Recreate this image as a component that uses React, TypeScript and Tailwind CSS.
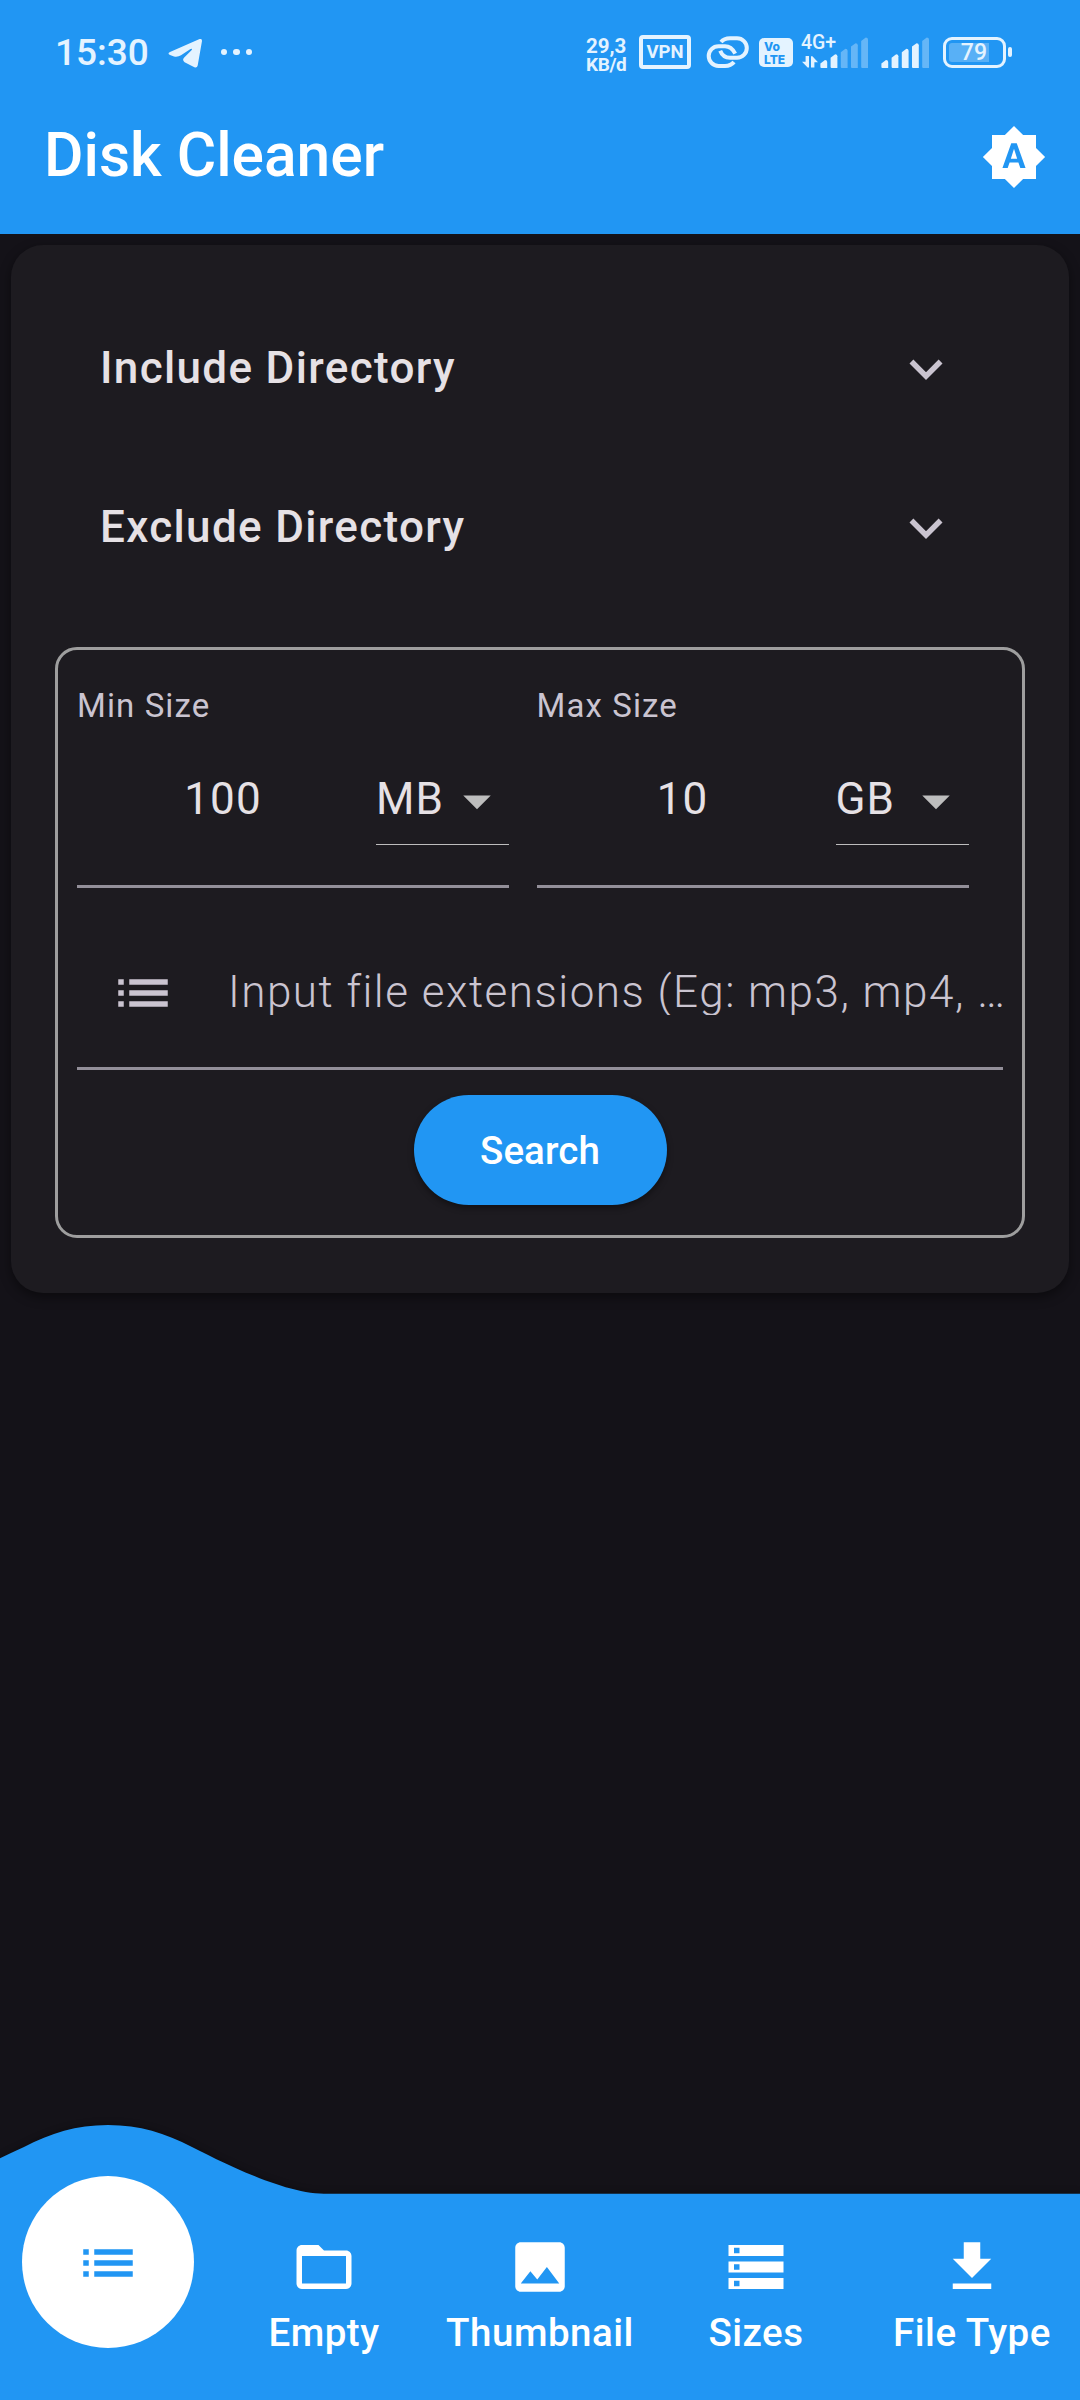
import React from "react";
import type { IconType } from "react-icons";
import {
  MdArrowDropDown,
  MdBrightnessAuto,
  MdExpandMore,
  MdFileDownload,
  MdFolderOpen,
  MdImage,
  MdList,
  MdStorage,
} from "react-icons/md";

function TelegramIcon() {
  return (
    <svg className="mt-[38px] ml-[18px] h-[31px] w-[36px]" viewBox="167 38 36 31" fill="currentColor">
      <path d="M199.6 39.1 170 52Q167 53.6 170 55L174 56.5Q178 57.2 181 55.3L190.5 49Q193.2 48 191.5 50.2L184.2 57.6Q181.8 60 184.6 62.2L194.4 67.2Q197 68.2 197.7 65.4L202 41Q202.2 38.2 199.6 39.1Z" />
    </svg>
  );
}

function LinkIcon() {
  return (
    <svg
      className="mt-[34px] ml-[14px] h-[36px] w-[46px]"
      viewBox="705 34 46 36"
      fill="none"
      stroke="currentColor"
      strokeWidth="4"
    >
      <path d="M735.2 53.6C732.5 48.5 729 46.3 725 46.3H718.5A9.8 9.8 0 0 0 718.5 65.9H725Q731 65.9 734 62" />
      <path d="M721 42Q724 38.2 730 38.2H737A9.8 9.8 0 0 1 737 57.8H730Q723 57.8 720.2 50.8" />
    </svg>
  );
}

function SignalBars({ active, className }: { active: number; className: string }) {
  const tops = [60, 54.3, 48.8, 43.2, 37.6];
  return (
    <svg className={className} viewBox="0 36 49 33" fill="currentColor">
      {tops.map((y, i) => {
        const x = i * 10.2 + 0.4;
        return (
          <path
            key={y}
            opacity={i < active ? 1 : 0.35}
            d={`M${x} ${y + 3.4}L${x + 4.6} ${y}Q${x + 6.8} ${y} ${x + 6.8} ${y + 2}V68H${x + 1}Q${x} 68 ${x} 67Z`}
          />
        );
      })}
    </svg>
  );
}

function StatusBar() {
  return (
    <div className="flex h-[80px] items-start text-[#e4f3ff]">
      <span className="mt-[31px] ml-[55px] w-[94px] text-[37px] leading-[44px] font-medium">15:30</span>
      <TelegramIcon />
      <div className="mt-[49px] ml-[18px] flex gap-[6px]">
        <span className="size-[6.4px] rounded-full bg-current" />
        <span className="size-[6.4px] rounded-full bg-current" />
        <span className="size-[6.4px] rounded-full bg-current" />
      </div>
      <div className="ml-auto flex items-start">
        <div className="mt-[37px] flex w-[42px] flex-col font-bold whitespace-nowrap">
          <span className="text-[20.5px] leading-[18px]">29,3</span>
          <span className="text-[19px] leading-[19px] tracking-[-0.4px]">KB/d</span>
        </div>
        <div className="mt-[35px] ml-[11px] flex h-[34px] w-[52px] items-center justify-center rounded-[4px] border-4 border-current text-[18.5px] leading-[20px] font-bold">
          VPN
        </div>
        <LinkIcon />
        <div className="mt-[38px] ml-[8px] flex h-[29px] w-[34px] flex-col rounded-[5px] bg-current pt-[2px] pl-[5px] font-['Inter'] text-[12px] leading-[13px] font-extrabold">
          <span className="text-[#2196f3]">Vo</span>
          <span className="text-[#2196f3]">LTE</span>
        </div>
        <div className="relative mt-[36px] ml-[9px] flex w-[67px] justify-between">
          <span className="absolute -top-[3px] -left-[1px] text-[19.5px] leading-[20px] font-medium">4G+</span>
          <svg className="mt-[20px] h-[13px] w-[16px]" viewBox="0 0 16 13" fill="currentColor">
            <path d="M3.6 0H7V11.5H5.6L0 5.8H3.6ZM9 .3H10.4L16 6.3H12.4V11.5H9Z" />
          </svg>
          <SignalBars active={2} className="h-[33px] w-[49px]" />
        </div>
        <SignalBars active={4} className="mt-[36px] ml-[12px] h-[33px] w-[49px]" />
        <div className="mt-[37px] ml-[13px] flex h-[31px] w-[63px] rounded-[9px] border-[3px] border-current p-[3px]">
          <div className="flex w-[40px] items-center justify-end rounded-l-[3px] bg-white/25 pr-[2px] text-[23px] leading-[24px] font-medium">
            79
          </div>
        </div>
        <div className="mt-[47px] mr-[68px] ml-[2px] h-[10px] w-[4px] rounded-[2px] bg-current" />
      </div>
    </div>
  );
}

function DirectoryRow({ title }: { title: string }) {
  return (
    <div className="flex h-[159px] items-center justify-between pr-[66px] pb-[2px] pl-[45px]">
      <span className="text-[44px] leading-[56px] font-medium tracking-[1.34px]">{title}</span>
      <MdExpandMore className="mt-[2px] size-[66px] text-[#cac4d0]" />
    </div>
  );
}

function SizeField({ label, value, unit }: { label: string; value: string; unit: string }) {
  return (
    <div className="w-[432px] border-b-[3px] border-[#938f99]">
      <div className="text-[33px] leading-[44px] tracking-[1.1px] text-[#cac4d0]">{label}</div>
      <div className="flex h-[157px] items-start justify-between pt-[26px] text-[44px] leading-[90px] tracking-[1.1px]">
        <span className="w-[292px] text-center">{value}</span>
        <div className="flex h-[91px] w-[133px] items-center justify-between border-b border-[#bdbdbd]">
          <span>{unit}</span>
          <MdArrowDropDown className="mt-[3px] size-[66px] shrink-0 text-[#bdbdbd]" />
        </div>
      </div>
    </div>
  );
}

function NavItem({ icon: Icon, label }: { icon: IconType; label: string }) {
  return (
    <div className="flex flex-1 flex-col items-center pt-[109px]">
      <Icon className="size-[66px]" />
      <span className="mt-[10px] text-[38.5px] leading-[45px] font-medium tracking-[0.5px] whitespace-nowrap">
        {label}
      </span>
    </div>
  );
}

function BottomNav() {
  return (
    <nav className="relative mt-auto flex h-[275px] text-white">
      <svg
        className="absolute inset-0 h-[275px] w-[1080px] drop-shadow-[0_-1px_3px_rgba(0,0,0,0.3)]"
        viewBox="0 2125 1080 275"
        fill="#2196f3"
      >
        <path d="M0 2158.3C8 2154.4 16 2150.7 24 2147C51 2133.2 76 2125 108 2125C140 2125 165 2133.2 192 2147C225 2163.8 285 2193.7 324 2193.7H1080V2400H0Z" />
      </svg>
      <div className="relative flex flex-1">
        <div className="flex flex-1 justify-center pt-[51px]">
          <div className="flex size-[172px] items-center justify-center rounded-full bg-white pt-[2px]">
            <MdList className="size-[66px] text-[#2196f3]" />
          </div>
        </div>
        <NavItem icon={MdFolderOpen} label="Empty" />
        <NavItem icon={MdImage} label="Thumbnail" />
        <NavItem icon={MdStorage} label="Sizes" />
        <NavItem icon={MdFileDownload} label="File Type" />
      </div>
    </nav>
  );
}

export default function App() {
  return (
    <div className="flex h-[2400px] w-[1080px] flex-col overflow-hidden bg-[#141218] font-['Roboto',sans-serif] text-[#e6e1e5]">
      <header className="h-[234px] bg-[#2196f3]">
        <StatusBar />
        <div className="flex h-[154px] items-center justify-between pr-[33px] pl-[44px] text-white">
          <h1 className="pb-[2px] text-[60.5px] leading-[72px] font-medium">Disk Cleaner</h1>
          <MdBrightnessAuto className="size-[66px]" />
        </div>
      </header>

      <main className="mx-[11px] mt-[11px] h-[1048px] rounded-[32px] bg-[#1d1b20] px-[44px] pt-[44px] shadow-[0_4px_12px_rgba(0,0,0,0.45)]">
        <DirectoryRow title="Include Directory" />
        <DirectoryRow title="Exclude Directory" />
        <section className="mt-[40px] flex h-[591px] flex-col rounded-[22px] border-[3px] border-[#9e9e9e] px-[19px] pt-[34px]">
          <div className="flex gap-[27.5px]">
            <SizeField label="Min Size" value="100" unit="MB" />
            <SizeField label="Max Size" value="10" unit="GB" />
          </div>
          <div className="flex h-[182px] items-start border-b-[3px] border-[#938f99] pt-[72px] pl-[33px] text-[#cac4d0]">
            <MdList className="size-[66px] shrink-0" />
            <span className="mt-[9px] ml-[52px] h-[46px] overflow-y-clip text-[44px] leading-[46px] font-light tracking-[1.5px] whitespace-nowrap">
              Input file extensions (Eg: mp3, mp4, …
            </span>
          </div>
          <button className="mt-[25px] h-[110px] w-[253px] self-center rounded-full bg-[#2196f3] pt-[2px] text-[38.5px] leading-[46px] font-medium tracking-[0.1px] text-white shadow-[0_3px_6px_rgba(0,0,0,0.4)]">
            Search
          </button>
        </section>
      </main>

      <BottomNav />
    </div>
  );
}
